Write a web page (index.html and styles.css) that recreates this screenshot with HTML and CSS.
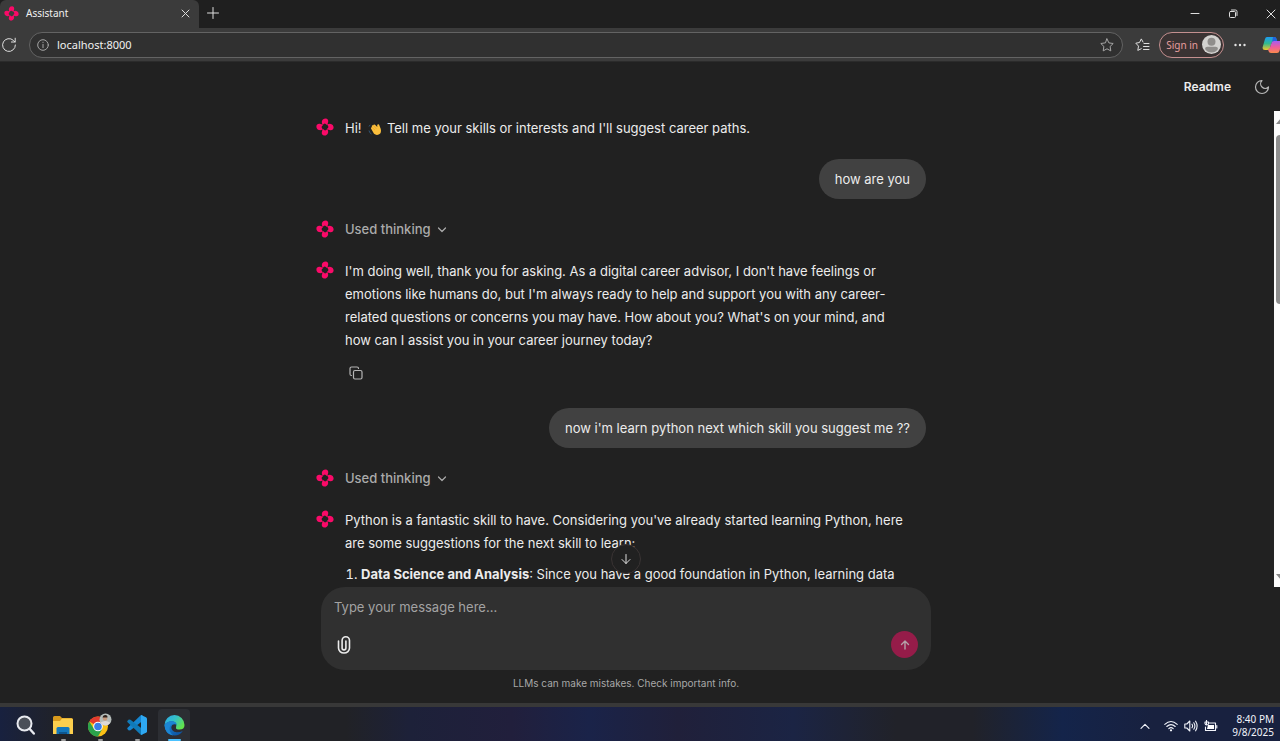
FILE: index.html
```html
<!DOCTYPE html>
<html lang="en">
<head>
<meta charset="utf-8">
<meta name="viewport" content="width=device-width, initial-scale=1">
<title>Assistant</title>
<link rel="stylesheet" href="styles.css">
</head>
<body>
<svg class="defs" aria-hidden="true">
  <defs>
    <path id="petal" d="M9.600 .4C11.500 .4 12.500 2 12.200 3.800L11.300 7.300 9.700 5.900Q8.900 5.300 7.900 5.900L6.600 6.800Q5.500 5 5.900 3.200Q6.700 .4 9.600 .4Z"/>
    <symbol id="logo" viewBox="0 0 18 18">
      <g fill="#fa0a68">
        <use href="#petal"/>
        <use href="#petal" transform="rotate(90 9 9)"/>
        <use href="#petal" transform="rotate(180 9 9)"/>
        <use href="#petal" transform="rotate(270 9 9)"/>
      </g>
    </symbol>
    <linearGradient id="edge-a" x1="0" y1="0" x2="1" y2=".6">
      <stop offset="0" stop-color="#2aa7ea"/><stop offset=".5" stop-color="#35c1c9"/><stop offset="1" stop-color="#62e34c"/>
    </linearGradient>
    <linearGradient id="edge-b" x1="0" y1="0" x2="1" y2="1">
      <stop offset="0" stop-color="#1b8fdc"/><stop offset="1" stop-color="#0b4a99"/>
    </linearGradient>
    <linearGradient id="cop-a" x1="0" y1="0" x2="0" y2="1">
      <stop offset="0" stop-color="#1c9cf5"/><stop offset=".5" stop-color="#32b98e"/><stop offset="1" stop-color="#f2c52c"/>
    </linearGradient>
    <linearGradient id="cop-b" x1="0" y1="0" x2="0" y2="1">
      <stop offset="0" stop-color="#a85df0"/><stop offset=".5" stop-color="#ee5c9c"/><stop offset="1" stop-color="#fa8a4c"/>
    </linearGradient>
  </defs>
</svg>

<header class="browser">
  <div class="tabstrip">
    <div class="tab">
      <svg class="tab-logo"><use href="#logo"/></svg>
      <span class="tab-title">Assistant</span>
      <button class="plain" aria-label="Close tab"><svg width="9" height="9" viewBox="0 0 9 9" class="line light"><path d="M1 1l7 7M8 1L1 8"/></svg></button>
    </div>
    <button class="plain new-tab" aria-label="New tab"><svg width="12" height="12" viewBox="0 0 12 12" class="line light"><path d="M6 .5v11M.5 6h11"/></svg></button>
    <div class="window-controls">
      <button class="plain" aria-label="Minimize"><svg width="10" height="10" viewBox="0 0 10 10" class="line light"><path d="M1 4.500h8"/></svg></button>
      <button class="plain" aria-label="Restore"><svg width="10" height="10" viewBox="0 0 10 10" class="line light"><rect x="1.500" y="2.500" width="6" height="6" rx="1"/><path d="M3.500 1h4Q9 1 9 2.500v4"/></svg></button>
      <button class="plain" aria-label="Close"><svg width="10" height="10" viewBox="0 0 10 10" class="line light"><path d="M1 1l8 8M9 1L1 9"/></svg></button>
    </div>
  </div>
  <div class="toolbar">
    <button class="plain reload" aria-label="Reload"><svg width="16" height="16" viewBox="0 0 16 16" class="line light"><path d="M14.400 8a6.400 6.400 0 1 1-2-4.600L14 5M14.200 1.200V5h-3.800"/></svg></button>
    <div class="address">
      <svg width="12" height="12" viewBox="0 0 12 12" class="line soft"><circle cx="6" cy="6" r="5.300"/><path d="M6 5.300v3.400M6 3.200v.3"/></svg>
      <input class="address-input" type="text" value="localhost:8000" aria-label="Address">
      <button class="plain" aria-label="Add to favorites"><svg width="14" height="14" viewBox="0 0 14 14" class="line soft"><path d="M7 .9l1.900 4 4.300.6-3.100 3 .7 4.400L7 10.800l-3.800 2.100.7-4.400-3.100-3 4.300-.6z"/></svg></button>
    </div>
    <button class="plain" aria-label="Favorites"><svg width="15" height="14" viewBox="0 0 15 14" class="line light"><path d="M8 4L6.300 .9 4.500 4.500.8 5.200l2.700 2.900-.7 4.300L6.300 10.700M9 5.500h5M8.500 8.500H14M8.500 11.500H14"/></svg></button>
    <button class="signin">Sign in
      <svg width="19" height="19" viewBox="0 0 19 19"><circle cx="9.500" cy="9.500" r="9.500" fill="#d3d2d0"/><circle cx="9.500" cy="6.800" r="4" fill="#8f8d8b"/><path d="M3 14Q3 11.800 5.500 11.800h8Q16 11.800 16 14Q13.500 17.500 9.500 17.500T3 14z" fill="#8f8d8b"/></svg>
    </button>
    <button class="plain more" aria-label="Settings and more"><svg width="12" height="4" viewBox="0 0 12 4" fill="#e4e4e4"><circle cx="1.500" cy="2" r="1.200"/><circle cx="6" cy="2" r="1.200"/><circle cx="10.500" cy="2" r="1.200"/></svg></button>
    <button class="plain copilot" aria-label="Copilot"><svg width="20" height="18" viewBox="0 0 20 18"><path d="M5 1h7q2 0 2.500 2l.5 2h-3Q10 5 9.300 7.500L8 12q-.6 2-2.500 2H3Q0 14 .7 11L3 3q.5-2 2-2z" fill="url(#cop-a)"/><path d="M11 1h1.500q1.700 0 2.200 2l.5 2H12q-1.500 0-2 1z" fill="#2263dc"/><path d="M15 17H9q-2 0-2.500-2L6 13q1.500 0 2-1.500L9.500 7Q10 5 12 5h5q3 0 2.300 3L17.500 15q-.5 2-2.500 2z" fill="url(#cop-b)"/></svg></button>
  </div>
</header>

<main class="app">
  <nav class="app-nav">
    <button class="plain readme">Readme</button>
    <button class="plain" aria-label="Toggle theme"><svg width="16" height="16" viewBox="0 0 16 16" class="line theme"><path d="M8 1.500a4.500 4.500 0 0 0 6.500 6.500A6.500 6.500 0 1 1 8 1.500z"/></svg></button>
  </nav>

  <section class="viewport">
    <div class="scroller">
      <div class="thread">
        <article class="message">
          <svg class="avatar"><use href="#logo"/></svg>
          <p>Hi! <svg class="wave" viewBox="0 0 14 14" role="img" aria-label="waving hand"><path d="M3 6.400Q2.800 5 4 5.200L3.700 4Q4 2.800 5.200 3.300Q5.600 1.900 7 2.700l2.300 2.200L9.200 3Q9.800 1.600 11 2.500l1.700 4.200q1 4-1.500 5.600-2.800 1.500-5.200-.5z" fill="#fbbf3c"/><path d="M4.200 5.400l2.800 2.800M5.400 3.500l2.900 3.300" stroke="#df9720" stroke-width=".6"/><path d="M1 8.500q.3 2.500 2.500 3.500M1 4.500L2.200 2.800" stroke="#315576" fill="none"/></svg> Tell me your skills or interests and I'll suggest career paths.</p>
        </article>

        <div class="bubble">how are you</div>

        <div class="message step">
          <svg class="avatar"><use href="#logo"/></svg>
          <button class="plain thinking">Used thinking <svg width="10" height="6" viewBox="0 0 10 6" class="line"><path d="M1.500 1L5 4.500 8.500 1"/></svg></button>
        </div>

        <article class="message">
          <svg class="avatar"><use href="#logo"/></svg>
          <div>
            <p>I'm doing well, thank you for asking. As a digital career advisor, I don't have feelings or emotions like humans do, but I'm always ready to help and support you with any career-related questions or concerns you may have. How about you? What's on your mind, and how can I assist you in your career journey today?</p>
            <button class="plain copy" aria-label="Copy to clipboard"><svg width="14" height="14" viewBox="0 0 14 14" class="line"><rect x="4.500" y="4.500" width="8.500" height="8.500" rx="1.500"/><path d="M2.500 9.500Q1 9.500 1 8V2.500Q1 1 2.500 1H8Q9.500 1 9.500 2.500"/></svg></button>
          </div>
        </article>

        <div class="bubble">now i'm learn python next which skill you suggest me ??</div>

        <div class="message step">
          <svg class="avatar"><use href="#logo"/></svg>
          <button class="plain thinking">Used thinking <svg width="10" height="6" viewBox="0 0 10 6" class="line"><path d="M1.500 1L5 4.500 8.500 1"/></svg></button>
        </div>

        <article class="message">
          <svg class="avatar"><use href="#logo"/></svg>
          <div>
            <p>Python is a fantastic skill to have. Considering you've already started learning Python, here are some suggestions for the next skill to learn:</p>
            <ol class="skills">
              <li><strong>Data Science and Analysis</strong>: Since you have a good foundation in Python, learning data</li>
            </ol>
          </div>
        </article>
      </div>
    </div>
    <div class="scrollbar" aria-hidden="true">
      <svg width="10" height="6" viewBox="0 0 10 6"><path d="M0 6l5-6 5 6z" fill="#8a8a8a"/></svg>
      <div class="thumb"></div>
      <svg class="down" width="10" height="6" viewBox="0 0 10 6"><path d="M0 0l5 6 5-6z" fill="#8a8a8a"/></svg>
    </div>
  </section>

  <footer class="dock">
    <div class="dock-column">
      <button class="plain jump" aria-label="Scroll to bottom"><svg width="10" height="10" viewBox="0 0 10 10" class="line light"><path d="M5 .5v9M1 5.500l4 4 4-4"/></svg></button>
      <form class="composer">
        <input class="prompt" type="text" placeholder="Type your message here..." aria-label="Message">
        <div class="composer-actions">
          <button type="button" class="plain" aria-label="Attach files"><svg width="14" height="18" viewBox="0 0 14 18" class="line clip"><path d="M1.500 5v7a5.500 5 0 0 0 11 0V4.500a3.700 3.700 0 0 0-7.400 0V12a1.900 1.900 0 0 0 3.800 0V5"/></svg></button>
          <button type="button" class="plain send" aria-label="Send"><svg width="10" height="10" viewBox="0 0 10 10" class="line arrow"><path d="M5 9V1.200M1.500 4.500L5 1l3.500 3.500"/></svg></button>
        </div>
      </form>
      <p class="disclaimer">LLMs can make mistakes. Check important info.</p>
    </div>
  </footer>
</main>

<footer class="taskbar">
  <div class="apps">
    <button class="plain app-icon" aria-label="Search"><svg width="20" height="20" viewBox="0 0 20 20" fill="none"><circle cx="8.500" cy="8.500" r="7" fill="#4a4f58" stroke="#e8eaf0" stroke-width="2"/><path d="M13.800 14l4 4.500" stroke="#e8eaf0" stroke-width="2.400" stroke-linecap="round"/></svg></button>
    <button class="plain app-icon running" aria-label="File Explorer"><svg width="20" height="20" viewBox="0 0 20 20"><path d="M0 2.500Q0 1 1.500 1H7l2 2h9.500Q20 3 20 4.500V8H0z" fill="#d99a1c"/><path d="M0 6h7l2-2.500h9.500Q20 3.500 20 5v14H0z" fill="#fccf4d"/><path d="M3.500 19v-5.500q0-1.500 1.500-1.500h10q1.500 0 1.500 1.500V19z" fill="#1478bd"/><path d="M6 19v-2h8v2z" fill="#0d568f"/></svg></button>
    <button class="plain app-icon running" aria-label="Chrome"><svg width="24" height="24" viewBox="0 0 24 24"><circle cx="10" cy="13.500" r="10" fill="#fbc116"/><path d="M10 13.500L1.300 8.500A10 10 0 0 1 18.700 8.500z" fill="#e33b2e"/><path d="M1.300 8.500A10 10 0 0 0 10 23.500l4.300-7.500H6z" fill="#2ba24c"/><circle cx="10" cy="13.500" r="4.800" fill="#fff"/><circle cx="10" cy="13.500" r="3.800" fill="#3a7ee8"/><circle cx="17.500" cy="6.500" r="6" fill="#b5bcb9"/><path d="M12.500 9.500q5-3 9.500 0-1 3-4.500 3t-5-3z" fill="#dedad8"/><circle cx="17" cy="5.500" r="2.300" fill="#c89a7d"/><path d="M14.500 4.500q.3-2.700 2.800-2.500t2.200 2.500z" fill="#30231e"/></svg></button>
    <button class="plain app-icon running" aria-label="Visual Studio Code"><svg width="20" height="20" viewBox="0 0 20 20"><path d="M14 0l1.500.2V6L3.500 15.200 1.800 15.500.3 14V13z" fill="#1585cf"/><path d="M.3 6L1.800 4.500l1.700.2L15.500 14v5.800L14 20 .3 7z" fill="#107ab8"/><path d="M14 0l5 2.200q1 .5 1 1.500v12.600q0 1-1 1.500L14 20z" fill="#2ea8f2"/></svg></button>
    <button class="plain app-icon active" aria-label="Edge"><svg width="21" height="21" viewBox="0 0 21 21"><path d="M.5 10A10 10 0 0 1 20.500 10q0 4.500-5 4.500-4 0-3.500-1.800Q13.500 7 8 6.500 3 6.300.5 10z" fill="url(#edge-a)"/><path d="M.5 10Q3 6 8 6.200q4.200.4 4.800 3.600Q8 8 7.300 12q0 4.500 5.200 5.300 3 .3 6.300-1.300-3 4.500-8.300 4.500Q1 20 .5 10z" fill="url(#edge-b)"/><path d="M.5 10Q3 6 8 6.200q3.500.3 4.500 2.800Q7 7.500 5.500 12.500q-.5 4.500 3.700 8Q.8 19 .5 10z" fill="#1c86d3"/></svg></button>
  </div>
  <div class="tray">
    <svg width="10" height="6" viewBox="0 0 10 6" class="line tray-line"><path d="M1 5.300l4-4 4 4"/></svg>
    <div class="status">
      <svg width="14" height="12" viewBox="0 0 14 12" class="line tray-line"><path d="M.8 4.300q6.200-5.500 12.400 0M2.800 6.500q4.200-3.700 8.400 0M4.800 8.600q2.200-2 4.400 0"/><circle cx="7" cy="10.300" r=".6"/></svg>
      <svg width="14" height="12" viewBox="0 0 14 12" class="line tray-line"><path d="M.8 4v4h2l3 3V1L2.800 4zM8 4.200q1.200 1.800 0 3.600M9.800 2.800q2.200 3.200 0 6.400M11.600 1.200q3 4.800 0 9.600"/></svg>
      <svg width="14" height="12" viewBox="0 0 14 12" class="line tray-line"><path d="M5 3h6.500v7.500h-10V7M12.800 5.500v2.500"/><path d="M4 5h6v4H3z" fill="#fff" stroke="none"/><path d="M2.500 0v5M1 2h3.500v1.500Q4.500 5 2.800 5T1 3.500z"/></svg>
    </div>
    <div class="clock"><time>8:40 PM</time><time>9/8/2025</time></div>
  </div>
</footer>
</body>
</html>
```

FILE: styles.css
```css
* { box-sizing: border-box; }

body {
  margin: 0;
  min-height: 100vh;
  display: flex;
  flex-direction: column;
  overflow: hidden;
  background: #212121;
  color: #ececec;
  font-family: Inter, "Liberation Sans", sans-serif;
  font-size: 13px;
}

p { margin: 0; }
svg { display: block; flex: none; }
.defs { position: absolute; width: 0; height: 0; }
.line { fill: none; stroke: currentColor; stroke-width: 1.2; stroke-linecap: round; stroke-linejoin: round; }
.light { color: #dedede; stroke-width: 1; }
.soft { color: #a5a5a5; stroke-width: 1; }

.plain {
  display: flex;
  align-items: center;
  justify-content: center;
  padding: 0;
  border: 0;
  background: none;
  color: inherit;
  font: inherit;
}

/* Browser frame */
.browser { font-family: "Noto Sans", "Open Sans", sans-serif; font-size: 11px; }
.tabstrip { display: flex; align-items: center; height: 28px; background: #1f1f1f; }
.tab {
  display: flex;
  align-items: center;
  gap: 7px;
  width: 199px;
  height: 28px;
  padding: 0 9px 2px 4px;
  background: #3b3b3b;
  border-radius: 6px 6px 0 0;
}
.tab-logo { width: 15px; height: 15px; }
.tab-title { flex: 1; color: #f0f0f0; font-size: 10px; }
.new-tab { margin-left: 8px; padding-bottom: 2px; }
.window-controls { display: flex; gap: 28px; margin-left: auto; padding-right: 4px; }

.toolbar {
  display: flex;
  align-items: center;
  height: 34px;
  padding-left: 1px;
  background: #3b3b3b;
  border-bottom: 1px solid #2b2b2b;
}
.address {
  flex: 1;
  display: flex;
  align-items: center;
  gap: 8px;
  height: 26px;
  margin: 0 12px;
  padding: 0 8px 0 7px;
  border: 1px solid #636363;
  border-radius: 13px;
  background: #303030;
}
.address-input {
  flex: 1;
  min-width: 0;
  padding: 0;
  border: 0;
  outline: 0;
  background: none;
  color: #f0f0f0;
  font: inherit;
}
.signin {
  display: flex;
  align-items: center;
  gap: 4px;
  height: 26px;
  margin-left: 9px;
  padding: 0 2px 0 6px;
  border: 1px solid #c48f8f;
  border-radius: 13px;
  background: #3a3333;
  color: #e79e9e;
  font: inherit;
  font-size: 10px;
}
.more { margin-left: 10px; }
.copilot { margin: 0 -2px 0 16px; }

/* Chat page */
.app { flex: 1; display: flex; flex-direction: column; min-height: 0; }
.app-nav {
  display: flex;
  align-items: center;
  justify-content: flex-end;
  gap: 23px;
  height: 49px;
  padding-right: 10px;
  font-size: 12px;
  font-weight: 600;
}
.theme { color: #b9b9b9; }

.viewport { flex: 1 1 0; display: flex; min-height: 0; overflow: hidden; }
.scroller { flex: 1; padding: 5px 32px 0 0; }
.thread {
  display: flex;
  flex-direction: column;
  max-width: 610px;
  margin: 0 auto;
  line-height: 23px;
}
.message { display: flex; gap: 11px; }
.message p { padding: 1px 18px 0 0; }
.avatar { width: 18px; height: 18px; margin-top: 2px; }
.wave { display: inline-block; width: 14px; height: 14px; vertical-align: -3px; margin: 0 1px 0 3px; }
.bubble {
  align-self: flex-end;
  margin: 19px 0;
  padding: 9px 16px 8px;
  border-radius: 20px;
  background: #414141;
}
.step { margin-bottom: 18px; }
.thinking { gap: 6px; color: #ababab; font-weight: 500; line-height: 23px; }
.copy { width: 22px; height: 22px; margin: 10px 0 5px; color: #b4b4b4; }
.skills { margin: 8px 0 0; padding-left: 16px; white-space: nowrap; }

.scrollbar {
  display: flex;
  flex-direction: column;
  align-items: flex-start;
  width: 6px;
  padding: 7px 0 7px 2px;
  overflow: hidden;
  background: #fcfcfc;
}
.thumb { width: 8px; height: 169px; margin-top: 11px; border-radius: 4px; background: #8f8f8f; }
.down { margin-top: auto; }

.dock { padding-right: 28px; }
.dock-column { position: relative; max-width: 610px; margin: 0 auto; }
.jump {
  position: absolute;
  bottom: calc(100% + 13px);
  left: 50%;
  width: 30px;
  height: 30px;
  margin-left: -15px;
  border: 1px solid #3a3434;
  border-radius: 50%;
  background: #212121;
}
.composer { padding: 9px 13px 12px; border-radius: 24px; background: #303030; }
.prompt {
  display: block;
  width: 100%;
  height: 22px;
  padding: 0;
  border: 0;
  outline: 0;
  background: none;
  color: #ececec;
  font: inherit;
}
.prompt::placeholder { color: #a3a3a3; opacity: 1; }
.composer-actions { display: flex; align-items: center; justify-content: space-between; margin-top: 13px; padding-left: 3px; }
.clip { stroke-width: 1.6; }
.arrow { stroke-width: 1.4; }
.send { width: 27px; height: 27px; border-radius: 50%; background: #951c49; color: #b5a0a8; }
.disclaimer { padding: 5px 0 12px; color: #a8a8a8; font-size: 10px; line-height: 16px; text-align: center; }

/* Taskbar */
.taskbar {
  display: flex;
  justify-content: space-between;
  height: 38px;
  border-top: 4px solid #383838;
  background: linear-gradient(90deg, #18213f 0, #212226 5%, #212226 27%, #1d2139 32%, #211f3c 40%, #1a2349 46%, #20203a 53%, #1b2444 62%, #212229 70%, #212229 76%, #14244a 83%, #18213f 90%, #18213f 100%);
  font-family: "Noto Sans", "Open Sans", sans-serif;
  font-size: 10px;
}
.apps { display: flex; align-items: flex-end; padding-left: 10px; gap: 5px; }
.app-icon { position: relative; width: 32px; height: 32px; }
.app-icon.active { background: #2c2e33; border-radius: 4px 4px 0 0; }
.running::after, .active::after {
  content: "";
  position: absolute;
  bottom: 0;
  width: 5px;
  height: 2px;
  border-radius: 1px;
  background: #9a9a9a;
}
.active::after { width: 13px; background: #4cc2ff; }
.tray { display: flex; align-items: center; gap: 14px; padding: 3px 6px 0 0; color: #f2f4fa; }
.tray-line { color: #f2f4fa; stroke-width: 1.1; }
.status { display: flex; gap: 6px; }
.clock { display: flex; flex-direction: column; align-items: flex-end; line-height: 13px; }
```
